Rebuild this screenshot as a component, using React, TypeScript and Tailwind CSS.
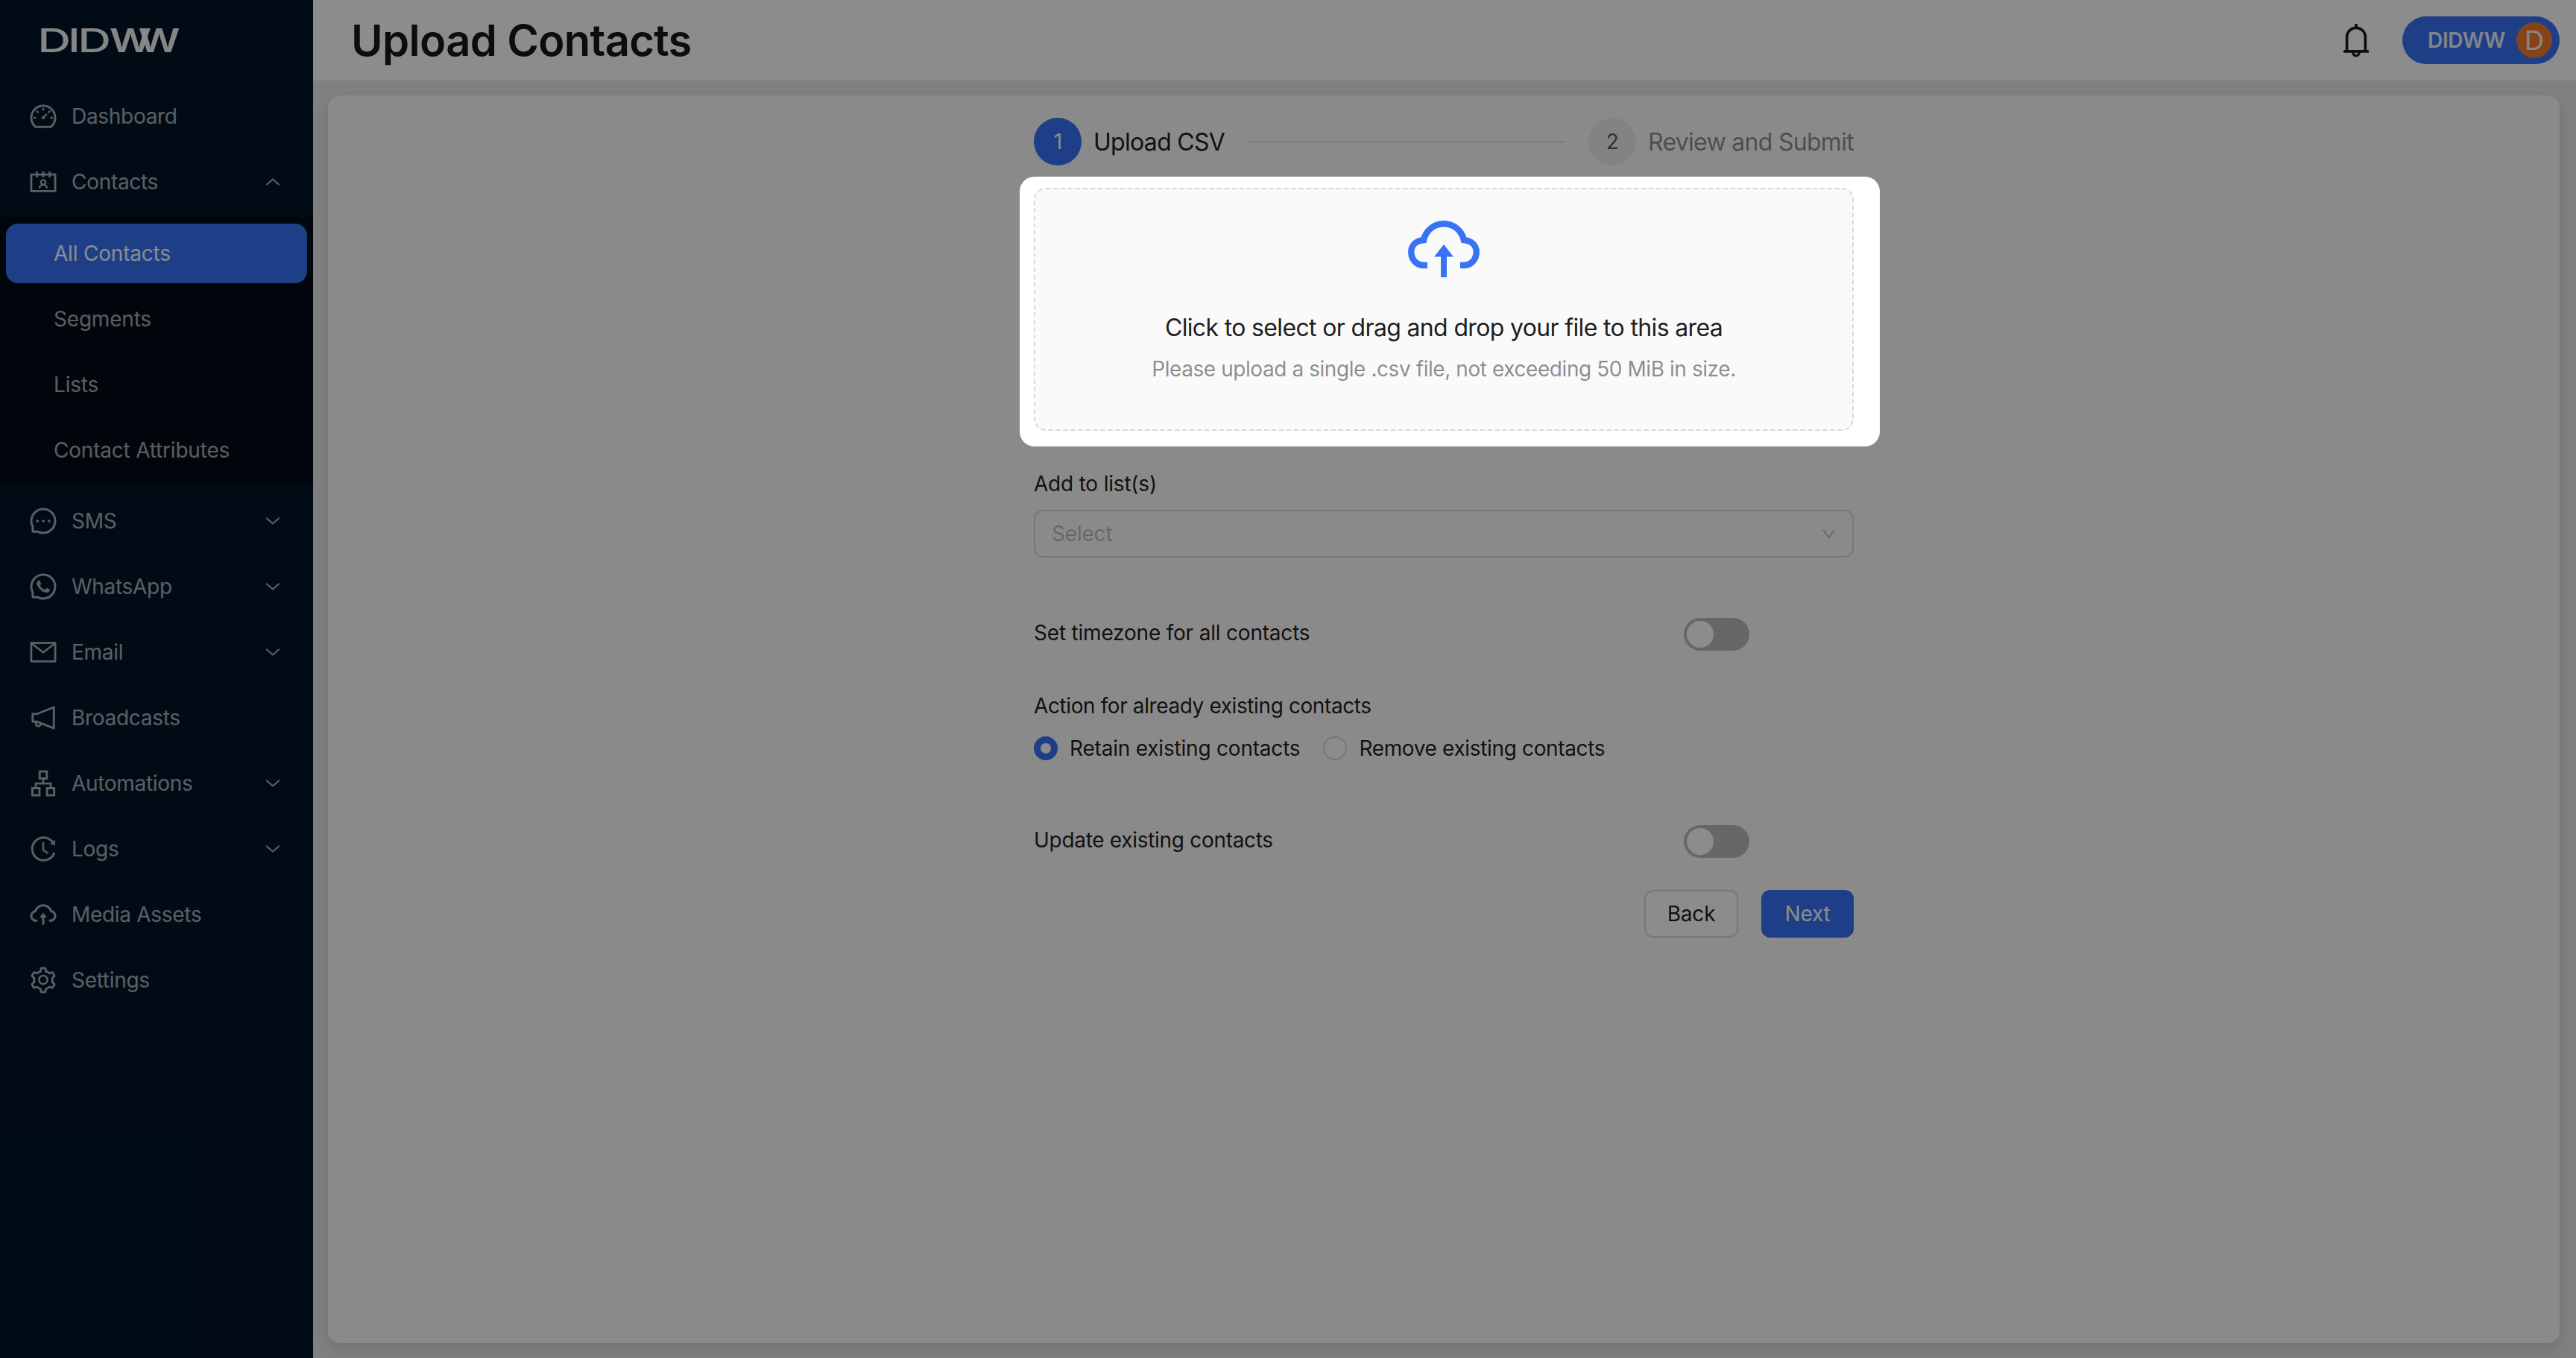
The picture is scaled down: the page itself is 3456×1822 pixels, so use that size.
import React from "react";
import {
  AiOutlineDashboard, AiOutlineContacts, AiOutlineMessage, AiOutlineWhatsApp, AiOutlineMail,
  AiOutlineNotification, AiOutlineApartment, AiOutlineHistory, AiOutlineCloudUpload, AiOutlineSetting,
  AiOutlineBell, AiOutlineDown,
} from "react-icons/ai";

const Chevron = ({ up }: { up?: boolean }) => (
  <svg width="18" height="10" viewBox="0 0 18 10" fill="none" stroke="currentColor" strokeWidth="2.2" strokeLinecap="round" strokeLinejoin="round" className="ml-auto mr-[45px]">
    <polyline points={up ? "1,8.5 9,1.5 17,8.5" : "1,1.5 9,8.5 17,1.5"} />
  </svg>
);

const CloudIcon = () => (
  <svg width="96" height="76" viewBox="0 0 96 76" className="text-[#3873f6]">
    <path d="M26 60H22C11 60 4.3 52 4.3 42C4.3 33 11 27 21 26C24 13 35 4.3 48 4.3C61 4.3 72 13 75 26C85 27 91.7 33 91.7 42C91.7 52 85 60 74 60H70" fill="none" stroke="currentColor" strokeWidth="8.5" />
    <path d="M48 32L61 48.5H52V76H44V48.5H35Z" fill="currentColor" />
  </svg>
);

type RowProps = { icon: React.ComponentType<{ size?: number; className?: string }>; label: string; arrow?: "up" | "down"; className?: string };
const Row = ({ icon: Icon, label, arrow, className = "" }: RowProps) => (
  <div className={`flex h-20 items-center pl-[38px] text-[28px] tracking-[-0.3px] text-white/65 ${className}`}>
    <Icon size={40} className="shrink-0" />
    <span className="ml-[18px]">{label}</span>
    {arrow && <Chevron up={arrow === "up"} />}
  </div>
);

const Switch = () => (
  <div className="flex h-11 w-[88px] items-center rounded-full bg-black/25 pl-1">
    <div className="h-9 w-9 rounded-full bg-white" />
  </div>
);

export default function App() {
  return (
    <div className="relative flex h-[1822px] w-[3456px] overflow-hidden bg-[#e9e9e9] font-['Inter',sans-serif] text-[28px] tracking-[-0.2px] text-black/90">
      <aside className="h-full w-[420px] shrink-0 bg-[#001529]">
        <div className="h-[116px] pl-[50px] pt-[30px]">
          <svg width="200" height="50" viewBox="0 0 200 50" className="block overflow-visible">
            <g fontFamily="Inter, sans-serif" fontSize="44" fill="rgba(255,255,255,0.95)">
              <text transform="scale(1.4 1)" x="0.4 29.3 39" y="40" fontWeight="500">DID</text>
              <text transform="scale(1.25 1)" x="77.6 108.4" y="40" fontWeight="600">WW</text>
            </g>
          </svg>
        </div>
        <Row icon={AiOutlineDashboard} label="Dashboard" className="mb-2" />
        <Row icon={AiOutlineContacts} label="Contacts" arrow="up" />
        <div className="mb-[9px] mt-[7px] bg-[#000c17] px-2 pb-[6px] pt-[9px] text-white/65">
          <div className="flex h-20 items-center rounded-2xl bg-[#3873f6] pl-[64px] text-white">All Contacts</div>
          <div className="mt-2 flex h-20 items-center pl-[64px]">Segments</div>
          <div className="mt-2 flex h-20 items-center pl-[64px]">Lists</div>
          <div className="mt-2 flex h-20 items-center pl-[64px]">Contact Attributes</div>
        </div>
        <Row icon={AiOutlineMessage} label="SMS" arrow="down" className="mb-2" />
        <Row icon={AiOutlineWhatsApp} label="WhatsApp" arrow="down" className="mb-2" />
        <Row icon={AiOutlineMail} label="Email" arrow="down" className="mb-2" />
        <Row icon={AiOutlineNotification} label="Broadcasts" className="mb-2" />
        <Row icon={AiOutlineApartment} label="Automations" arrow="down" className="mb-2" />
        <Row icon={AiOutlineHistory} label="Logs" arrow="down" className="mb-2" />
        <Row icon={AiOutlineCloudUpload} label="Media Assets" className="mb-2" />
        <Row icon={AiOutlineSetting} label="Settings" />
      </aside>

      <div className="flex min-w-0 flex-1 flex-col">
        <header className="flex h-[108px] shrink-0 items-center bg-white pl-[51px] pr-[22px]">
          <h1 className="text-[58px] font-semibold leading-none tracking-[-0.7px] text-black/90">Upload Contacts</h1>
          <AiOutlineBell size={52} className="ml-auto text-black/90" />
          <div className="ml-[36px] flex h-16 w-[211px] items-center rounded-full bg-[#3873f6] pl-[34px] font-semibold text-white/90">
            <span className="w-[101px] tracking-[-0.3px]">DIDWW</span>
            <span className="ml-[18px] flex h-12 w-12 items-center justify-center rounded-full bg-[#f27a30] text-[36px] font-normal text-white/90">D</span>
          </div>
        </header>

        <main className="mb-5 ml-5 mr-[22px] mt-5 flex-1 rounded-2xl bg-[#fbfbfb] pt-[30px] shadow-[0_8px_20px_rgba(0,0,0,0.1)]">
          <div className="mx-auto w-[1100px]">
            <div className="flex h-16 items-center text-[32px] tracking-[-0.7px]">
              <span className="flex h-16 w-16 items-center justify-center rounded-full bg-[#3873f6] text-[28px] text-white">1</span>
              <span className="ml-4 mt-px">Upload CSV</span>
              <span className="mx-[31px] h-0.5 flex-1 bg-black/10" />
              <span className="flex h-16 w-16 items-center justify-center rounded-full bg-black/5 text-[28px] text-black/65">2</span>
              <span className="ml-4 mt-px text-black/45">Review and Submit</span>
            </div>

            <div className="relative z-20 -ml-[19px] -mr-[35px] mt-[15px] rounded-[20px] bg-white pb-[21px] pl-[19px] pr-[35px] pt-[15px]">
              <div className="flex h-[326px] flex-col items-center rounded-2xl border-2 border-dashed border-[#d9d9d9] bg-[#fafafa] pt-[42px]">
                <CloudIcon />
                <p className="mt-[44px] text-[32px] leading-[48px] tracking-[-0.65px] text-black/90">Click to select or drag and drop your file to this area</p>
                <p className="mt-[9px] leading-[44px] tracking-[-0.43px] text-black/45">Please upload a single .csv file, not exceeding 50 MiB in size.</p>
              </div>
            </div>

            <label className="mt-7 block leading-[44px]">Add to list(s)</label>
            <div className="mt-[13px] flex h-16 items-center rounded-xl border-2 border-[#d9d9d9] pl-[22px] pr-5 text-black/25">
              <span>Select</span>
              <AiOutlineDown size={23} className="ml-auto" />
            </div>

            <div className="mt-[81px] flex items-center">
              <span className="-mt-1 w-[872px] leading-[44px]">Set timezone for all contacts</span>
              <Switch />
            </div>

            <p className="mt-[52px] leading-[44px] tracking-[-0.4px]">Action for already existing contacts</p>
            <div className="mt-[13px] flex h-11 items-center">
              <span className="flex h-8 w-8 items-center justify-center rounded-full bg-[#3873f6]"><span className="h-3.5 w-3.5 rounded-full bg-white" /></span>
              <span className="ml-4">Retain existing contacts</span>
              <span className="ml-[31px] h-8 w-8 rounded-full border-2 border-[#d9d9d9] bg-white" />
              <span className="ml-4 tracking-[-0.35px]">Remove existing contacts</span>
            </div>

            <div className="mt-[81px] flex items-center">
              <span className="-mt-1 w-[872px] leading-[44px] tracking-[-0.3px]">Update existing contacts</span>
              <Switch />
            </div>

            <div className="mt-[43px] flex justify-end gap-[31px]">
              <button className="h-16 w-[126px] rounded-xl border-2 border-[#d9d9d9] bg-white text-black/90">Back</button>
              <button className="h-16 w-[124px] rounded-xl bg-[#3873f6] text-white">Next</button>
            </div>
          </div>
        </main>
      </div>

      <div className="absolute inset-0 z-10 bg-black/45" />
    </div>
  );
}
